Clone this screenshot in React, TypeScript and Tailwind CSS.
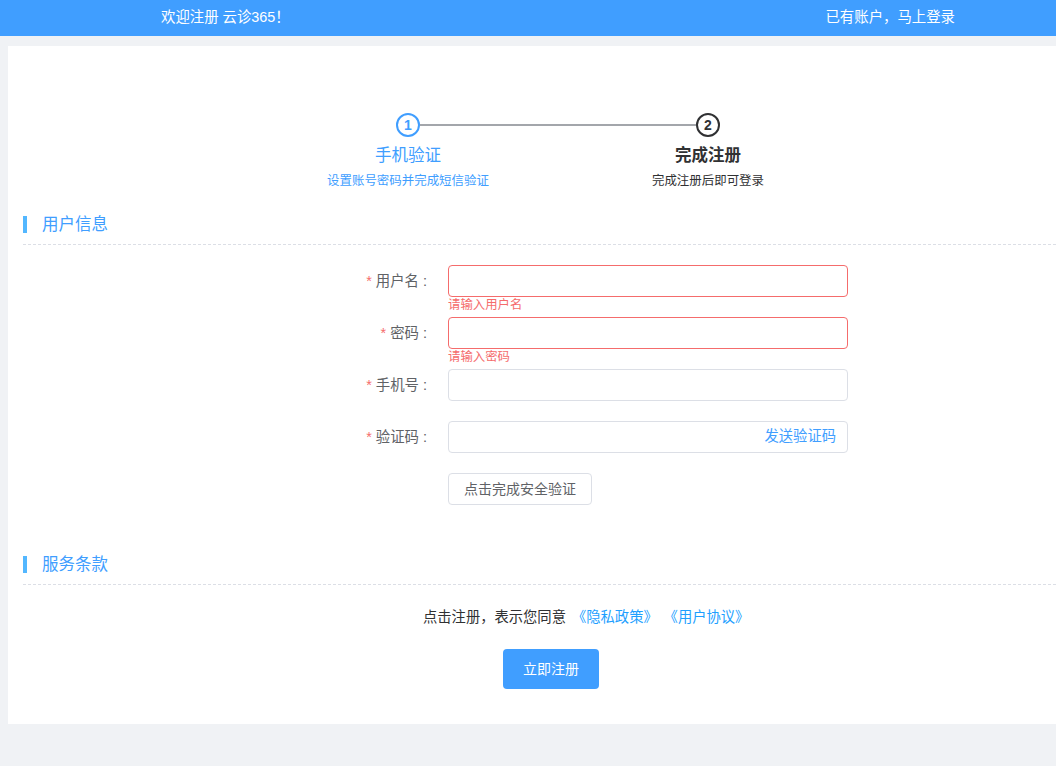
const font = { fontFamily: '"Liberation Sans", "Noto Sans CJK SC", sans-serif' };

function Field({ label, error, children }: { label: string; error?: string; children?: React.ReactNode }) {
  return (
    <div className="relative flex h-8 mb-5 items-center">
      <div className="w-[171px] mr-[21px] pt-[2px] text-right text-[14.4px] text-[#606266] whitespace-nowrap">
        <span className="text-[#f56c6c] mr-1">*</span>
        {label}
        <span className="ml-1">:</span>
      </div>
      <div className={"relative flex h-8 w-[400px] items-center justify-end rounded border pl-3 pr-[11px] " + (error ? "border-[#f56c6c]" : "border-[#dcdfe6]")}>
        {children}
      </div>
      {error && (
        <div className="absolute left-[192px] top-[32px] text-[12.4px] leading-[16px] text-[#f56c6c]">{error}</div>
      )}
    </div>
  );
}

function SectionTitle({ children }: { children: string }) {
  return (
    <div className="ml-[15px] flex h-[35px] items-center border-b border-dashed border-[#dcdfe6] pb-[5px]">
      <span className="h-[17px] w-1 bg-[#53b7ff]" />
      <span className="ml-[15px] text-[16.5px] leading-[17px] text-[#409eff]">{children}</span>
    </div>
  );
}

export default function App() {
  return (
    <div className="h-[766px] overflow-hidden bg-[#f0f2f5]" style={font}>
      <header className="flex h-9 items-center justify-between bg-[#409eff] pb-[1px] pl-[161px] pr-[101px] text-[14.4px] text-white">
        <span>欢迎注册 云诊365！</span>
        <span>已有账户，马上登录</span>
      </header>
      <main className="ml-2 mt-[10px] h-[678px] bg-white pt-[67px]">
        <div className="ml-[250px] flex w-[600px]">
          <div className="relative flex w-[300px] flex-col items-center">
            <div className="absolute left-[162px] top-[11px] h-0.5 w-[276px] bg-[#a3a6ab]" />
            <div className="flex h-6 w-6 items-center justify-center rounded-full border-2 border-[#409eff] text-sm font-bold text-[#409eff]">1</div>
            <div className="mt-[7px] text-[16.5px] leading-[22px] text-[#409eff]">手机验证</div>
            <div className="mt-[7px] text-[12.46px] leading-[17px] text-[#409eff]">设置账号密码并完成短信验证</div>
          </div>
          <div className="flex w-[300px] flex-col items-center">
            <div className="flex h-6 w-6 items-center justify-center rounded-full border-2 border-[#303133] text-sm font-bold text-[#303133]">2</div>
            <div className="mt-[7px] text-[16.5px] font-bold leading-[22px] text-[#303133]">完成注册</div>
            <div className="mt-[7px] text-[12.46px] leading-[17px] text-[#303133]">完成注册后即可登录</div>
          </div>
        </div>

        <div className="mt-[20px]">
          <SectionTitle>用户信息</SectionTitle>
        </div>

        <div className="ml-[248px] mt-5">
          <Field label="用户名" error="请输入用户名" />
          <Field label="密码" error="请输入密码" />
          <Field label="手机号" />
          <Field label="验证码">
            <span className="text-[14.3px] text-[#409eff]">发送验证码</span>
          </Field>
          <div className="ml-[192px]">
            <button className="h-8 w-36 rounded border border-[#dcdfe6] bg-white text-sm text-[#606266]">点击完成安全验证</button>
          </div>
        </div>

        <div className="mt-[45px]">
          <SectionTitle>服务条款</SectionTitle>
        </div>

        <div className="ml-[415px] mt-[22px] text-[14.3px] leading-[20px] text-[#303133] whitespace-nowrap">
          点击注册，表示您同意
          <span className="ml-[6px] text-[#1e9fff]">《隐私政策》</span>
          <span className="ml-[13px] text-[#1e9fff]">《用户协议》</span>
        </div>

        <button className="ml-[495px] mt-[22px] block h-10 w-24 rounded bg-[#409eff] text-sm text-white">立即注册</button>
      </main>
    </div>
  );
}
